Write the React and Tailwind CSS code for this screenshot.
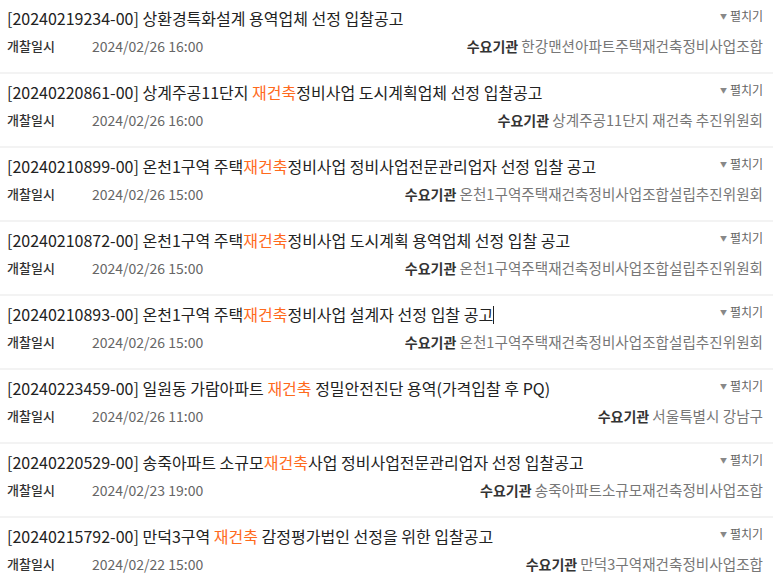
const ROWS = [
  { no: '20240219234-00', title: ['상환경특화설계 용역업체 선정 입찰공고'], date: '2024/02/26 16:00', org: '한강맨션아파트주택재건축정비사업조합' },
  { no: '20240220861-00', title: ['상계주공11단지 ', '재건축', '정비사업 도시계획업체 선정 입찰공고'], date: '2024/02/26 16:00', org: '상계주공11단지 재건축 추진위원회' },
  { no: '20240210899-00', title: ['온천1구역 주택', '재건축', '정비사업 정비사업전문관리업자 선정 입찰 공고'], date: '2024/02/26 15:00', org: '온천1구역주택재건축정비사업조합설립추진위원회' },
  { no: '20240210872-00', title: ['온천1구역 주택', '재건축', '정비사업 도시계획 용역업체 선정 입찰 공고'], date: '2024/02/26 15:00', org: '온천1구역주택재건축정비사업조합설립추진위원회' },
  { no: '20240210893-00', title: ['온천1구역 주택', '재건축', '정비사업 설계자 선정 입찰 공고'], date: '2024/02/26 15:00', org: '온천1구역주택재건축정비사업조합설립추진위원회', cursor: true },
  { no: '20240223459-00', title: ['일원동 가람아파트 ', '재건축', ' 정밀안전진단 용역(가격입찰 후 PQ)'], date: '2024/02/26 11:00', org: '서울특별시 강남구' },
  { no: '20240220529-00', title: ['송죽아파트 소규모', '재건축', '사업 정비사업전문관리업자 선정 입찰공고'], date: '2024/02/23 19:00', org: '송죽아파트소규모재건축정비사업조합' },
  { no: '20240215792-00', title: ['만덕3구역 ', '재건축', ' 감정평가법인 선정을 위한 입찰공고'], date: '2024/02/22 15:00', org: '만덕3구역재건축정비사업조합' },
];

function Row({ r }) {
  return (
    <div className="h-[74px] border-b-2 border-[#f3f3f3] pl-[7px] pr-[10px] pt-[6px]">
      <div className="flex items-start justify-between">
        <p className="text-[16px] leading-[24px] text-[#222] whitespace-nowrap">
          [{r.no}]{' '}
          {r.title.map((t, i) => (
            <span key={i} className={i === 1 ? 'text-[#ff6a1c]' : ''}>{t}</span>
          ))}
          {r.cursor && <span className="inline-block w-px h-[18px] bg-[#222] align-[-3px]" />}
        </p>
        <span className="flex items-center gap-[3px] text-[12px] leading-[20px] text-[#666] whitespace-nowrap">
          <span className="text-[7px] text-[#888]">▼</span>펼치기
        </span>
      </div>
      <div className="mt-[6px] flex items-center justify-between text-[14px] leading-[20px] whitespace-nowrap">
        <div className="flex items-center">
          <span className="w-[85px] text-[13px] font-medium text-[#333]">개찰일시</span>
          <span className="text-[#666]">{r.date}</span>
        </div>
        <div>
          <span className="font-bold text-[#333]">수요기관</span>{' '}
          <span className="text-[14.6px] text-[#777]">{r.org}</span>
        </div>
      </div>
    </div>
  );
}

export default function App() {
  return (
    <div className="w-[773px] h-[586px] overflow-hidden bg-white" style={{ fontFamily: '"Noto Sans CJK KR", "Noto Sans", sans-serif' }}>
      {ROWS.map(r => <Row key={r.no} r={r} />)}
    </div>
  );
}
